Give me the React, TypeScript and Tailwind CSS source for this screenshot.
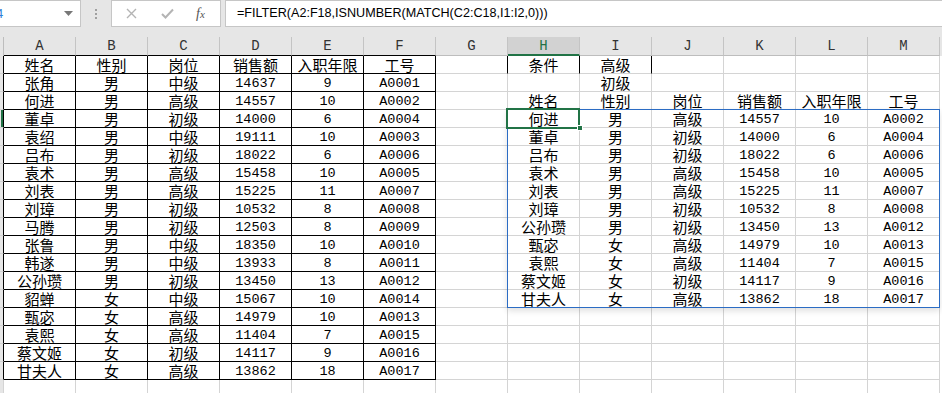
import React from "react";

const COLS = ["A", "B", "C", "D", "E", "F", "G", "H", "I", "J", "K", "L", "M"];

const LEFT: string[][] = [
  ["姓名", "性别", "岗位", "销售额", "入职年限", "工号"],
  ["张角", "男", "中级", "14637", "9", "A0001"],
  ["何进", "男", "高级", "14557", "10", "A0002"],
  ["董卓", "男", "初级", "14000", "6", "A0004"],
  ["袁绍", "男", "中级", "19111", "10", "A0003"],
  ["吕布", "男", "初级", "18022", "6", "A0006"],
  ["袁术", "男", "高级", "15458", "10", "A0005"],
  ["刘表", "男", "高级", "15225", "11", "A0007"],
  ["刘璋", "男", "初级", "10532", "8", "A0008"],
  ["马腾", "男", "初级", "12503", "8", "A0009"],
  ["张鲁", "男", "中级", "18350", "10", "A0010"],
  ["韩遂", "男", "中级", "13933", "8", "A0011"],
  ["公孙瓒", "男", "初级", "13450", "13", "A0012"],
  ["貂蝉", "女", "中级", "15067", "10", "A0014"],
  ["甄宓", "女", "高级", "14979", "10", "A0013"],
  ["袁熙", "女", "高级", "11404", "7", "A0015"],
  ["蔡文姬", "女", "初级", "14117", "9", "A0016"],
  ["甘夫人", "女", "高级", "13862", "18", "A0017"],
];

// spilled result of the FILTER formula, as shown in the sheet
const SPILL: string[][] = [
  ["何进", "男", "高级", "14557", "10", "A0002"],
  ["董卓", "男", "初级", "14000", "6", "A0004"],
  ["吕布", "男", "初级", "18022", "6", "A0006"],
  ["袁术", "男", "高级", "15458", "10", "A0005"],
  ["刘表", "男", "高级", "15225", "11", "A0007"],
  ["刘璋", "男", "初级", "10532", "8", "A0008"],
  ["公孙瓒", "男", "初级", "13450", "13", "A0012"],
  ["甄宓", "女", "高级", "14979", "10", "A0013"],
  ["袁熙", "女", "高级", "11404", "7", "A0015"],
  ["蔡文姬", "女", "初级", "14117", "9", "A0016"],
  ["甘夫人", "女", "高级", "13862", "18", "A0017"],
];

const grid: string[][] = Array.from({ length: 19 }, () => Array(13).fill(""));
LEFT.forEach((row, r) => row.forEach((v, c) => (grid[r][c] = v)));
grid[0][7] = "条件";
grid[0][8] = "高级";
grid[1][8] = "初级";
LEFT[0].forEach((v, c) => (grid[2][7 + c] = v));
SPILL.forEach((row, i) => row.forEach((v, c) => (grid[3 + i][7 + c] = v)));

const isCjk = (s: string) => /[\u4e00-\u9fff]/.test(s);

function Cell({ value, r, c }: { value: string; r: number; c: number }) {
  const inTable = c <= 5 && r <= 17;
  const blackRight = inTable || (r === 0 && (c === 6 || c === 7 || c === 8));
  const blackBottom = inTable;
  return (
    <div
      className={
        "flex h-[18px] w-[72px] shrink-0 items-end justify-center whitespace-nowrap border-b border-r text-black " +
        (blackRight ? "border-r-black " : "border-r-[#d4d4d4] ") +
        (blackBottom ? "border-b-black " : "border-b-[#d4d4d4] ") +
        (isCjk(value)
          ? "font-['Noto_Sans_CJK_SC',sans-serif] text-[15px] leading-[17px]"
          : "font-['Liberation_Mono',monospace] text-[13.5px] leading-[15px] text-[#111]")
      }
    >
      {value}
    </div>
  );
}

function TopBar() {
  return (
    <div className="flex h-[37px] items-start bg-[#e6e6e6]">
      <div className="flex h-[27px] w-[81px] shrink-0 items-center justify-between overflow-hidden border border-l-0 border-[#c6c6c6] bg-white pr-[7px]">
        <span className="-ml-[4px] font-['Liberation_Sans',sans-serif] text-[13px] text-[#2f7fd8]">4</span>
        <svg width="9" height="6" viewBox="0 0 9 6">
          <path d="M0 0 H9 L4.5 5 Z" fill="#777" />
        </svg>
      </div>
      <div className="flex h-[27px] w-[30px] shrink-0 flex-col items-center justify-center gap-[2px]">
        <span className="h-[2px] w-[2px] bg-[#a0a0a0]" />
        <span className="h-[2px] w-[2px] bg-[#a0a0a0]" />
        <span className="h-[2px] w-[2px] bg-[#a0a0a0]" />
      </div>
      <div className="flex h-[27px] w-[110px] shrink-0 items-center border border-[#c6c6c6] bg-white">
        <svg className="ml-[14px]" width="11" height="11" viewBox="0 0 11 11">
          <path d="M1 1 L10 10 M10 1 L1 10" stroke="#b4b4b4" strokeWidth="1.4" />
        </svg>
        <svg className="ml-[24px]" width="13" height="11" viewBox="0 0 13 11">
          <path d="M1 6 L4.5 9.5 L12 1.5" stroke="#b4b4b4" strokeWidth="2" fill="none" />
        </svg>
        <span className="ml-[22px] font-['Liberation_Serif',serif] text-[14px] italic text-[#555]">
          f<span className="text-[11px]">x</span>
        </span>
      </div>
      <div className="ml-[4px] flex h-[27px] flex-1 items-center border border-r-0 border-[#c6c6c6] bg-white pl-[11px] font-['Liberation_Sans',sans-serif] text-[12.6px] text-black">
        =FILTER(A2:F18,ISNUMBER(MATCH(C2:C18,I1:I2,0)))
      </div>
    </div>
  );
}

export default function App() {
  return (
    <div className="relative h-[393px] w-[942px] overflow-hidden bg-white">
      <TopBar />
      <div className="flex h-[19px] bg-[#e6e6e6]">
        <div className="h-[19px] w-[4px] shrink-0 border-r border-[#bdbdbd]" />
        {COLS.map((l, c) => (
          <div
            key={l}
            className={
              "flex h-[19px] w-[72px] shrink-0 items-center justify-center border-r border-r-[#c4c4c4] pt-[1px] font-['Liberation_Mono',monospace] text-[14px] " +
              (c === 7
                ? "border-b-2 border-b-[#217346] bg-[#d2d2d2] text-[#217346]"
                : c <= 5
                  ? "border-b border-b-black text-[#333]"
                  : "border-b border-b-[#bdbdbd] text-[#333]")
            }
          >
            {l}
          </div>
        ))}
      </div>
      {grid.map((row, r) => (
        <div key={r} className="flex">
          <div
            className={
              "relative h-[18px] w-[4px] shrink-0 border-b border-r border-b-[#d4d4d4] bg-[#e6e6e6] " +
              (r <= 17 ? "border-r-black" : "border-r-[#d4d4d4]")
            }
          >
            {r === 3 && <div className="absolute left-[1px] top-0 h-[17px] w-[2px] bg-[#217346]" />}
          </div>
          {row.map((v, c) => (
            <Cell key={c} value={v} r={r} c={c} />
          ))}
        </div>
      ))}

      {/* spill range outline */}
      <div className="pointer-events-none absolute left-[507px] top-[109px] h-[199px] w-[433px] border border-[#2b6cc4] shadow-[0_3px_6px_rgba(0,0,0,0.12)]" />
      {/* active cell */}
      <div className="pointer-events-none absolute left-[506px] top-[108px] h-[21px] w-[74px] border-2 border-[#217346]" />
      <div className="pointer-events-none absolute left-[577px] top-[125px] h-[6px] w-[6px] border border-white bg-[#217346]" />
    </div>
  );
}
